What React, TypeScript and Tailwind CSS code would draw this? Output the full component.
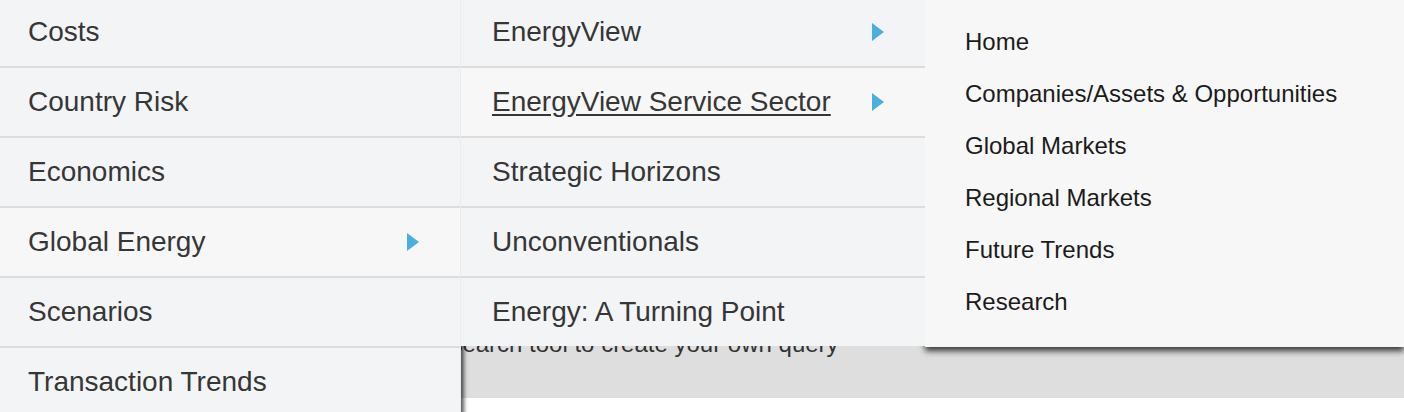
import React from "react";

type Item = { label: string; sub?: boolean; active?: boolean; underline?: boolean };

const primary: Item[] = [
  { label: "Costs" },
  { label: "Country Risk" },
  { label: "Economics" },
  { label: "Global Energy", sub: true, active: true },
  { label: "Scenarios" },
  { label: "Transaction Trends" },
];

const secondary: Item[] = [
  { label: "EnergyView", sub: true },
  { label: "EnergyView Service Sector", sub: true, active: true, underline: true },
  { label: "Strategic Horizons" },
  { label: "Unconventionals" },
  { label: "Energy: A Turning Point" },
];

const tertiary = [
  "Home",
  "Companies/Assets & Opportunities",
  "Global Markets",
  "Regional Markets",
  "Future Trends",
  "Research",
];

function Caret() {
  return (
    <svg width="12" height="18" viewBox="0 0 12 18" className="shrink-0">
      <polygon points="0,0 12,9 0,18" fill="#4aafdf" />
    </svg>
  );
}

function Row({ item, padLeft }: { item: Item; padLeft: string }) {
  return (
    <a
      href="#"
      className={`flex h-[70px] items-center justify-between border-b-2 border-[#dcdcdc] pr-[41px] last:h-[68px] last:border-b-0 ${padLeft} ${
        item.active ? "bg-[#f7f7f7]" : "bg-[#f3f4f6]"
      }`}
    >
      <span className={item.underline ? "underline underline-offset-[3px]" : ""}>{item.label}</span>
      {item.sub && <Caret />}
    </a>
  );
}

export default function App() {
  return (
    <div className="relative h-[412px] w-[1404px] overflow-hidden bg-white font-['Liberation_Sans',Arial,sans-serif]">
      {/* page content behind the menu */}
      <div className="h-[398px] bg-[#dedede] pl-[361px] pt-[331px]">
        <p className="text-[24px] leading-[26px] text-[#333]">Use the search tool to create your own query</p>
      </div>

      {/* mega menu */}
      <nav className="absolute left-0 top-0 flex items-start text-[28px] text-[#363636]">
        <div className="relative z-0 -mt-[2px] w-[461px] border-r border-[#eaebed] bg-[#f3f4f6] shadow-[3px_0_4px_rgba(0,0,0,0.65)]">
          {primary.map((it) => (
            <Row key={it.label} item={it} padLeft="pl-7" />
          ))}
        </div>
        <div className="relative z-20 -mt-[2px] w-[464px] bg-[#f3f4f6]">
          {secondary.map((it) => (
            <Row key={it.label} item={it} padLeft="pl-[31px]" />
          ))}
        </div>
        <ul className="relative z-10 h-[347px] w-[479px] bg-[#f7f7f7] pb-[19px] pl-10 pt-4 text-[24px] text-[#1b1b1b] shadow-[0_4px_6px_rgba(0,0,0,0.75)]">
          {tertiary.map((t) => (
            <li key={t} className="flex h-[52px] items-center">
              {t}
            </li>
          ))}
        </ul>
      </nav>
    </div>
  );
}
